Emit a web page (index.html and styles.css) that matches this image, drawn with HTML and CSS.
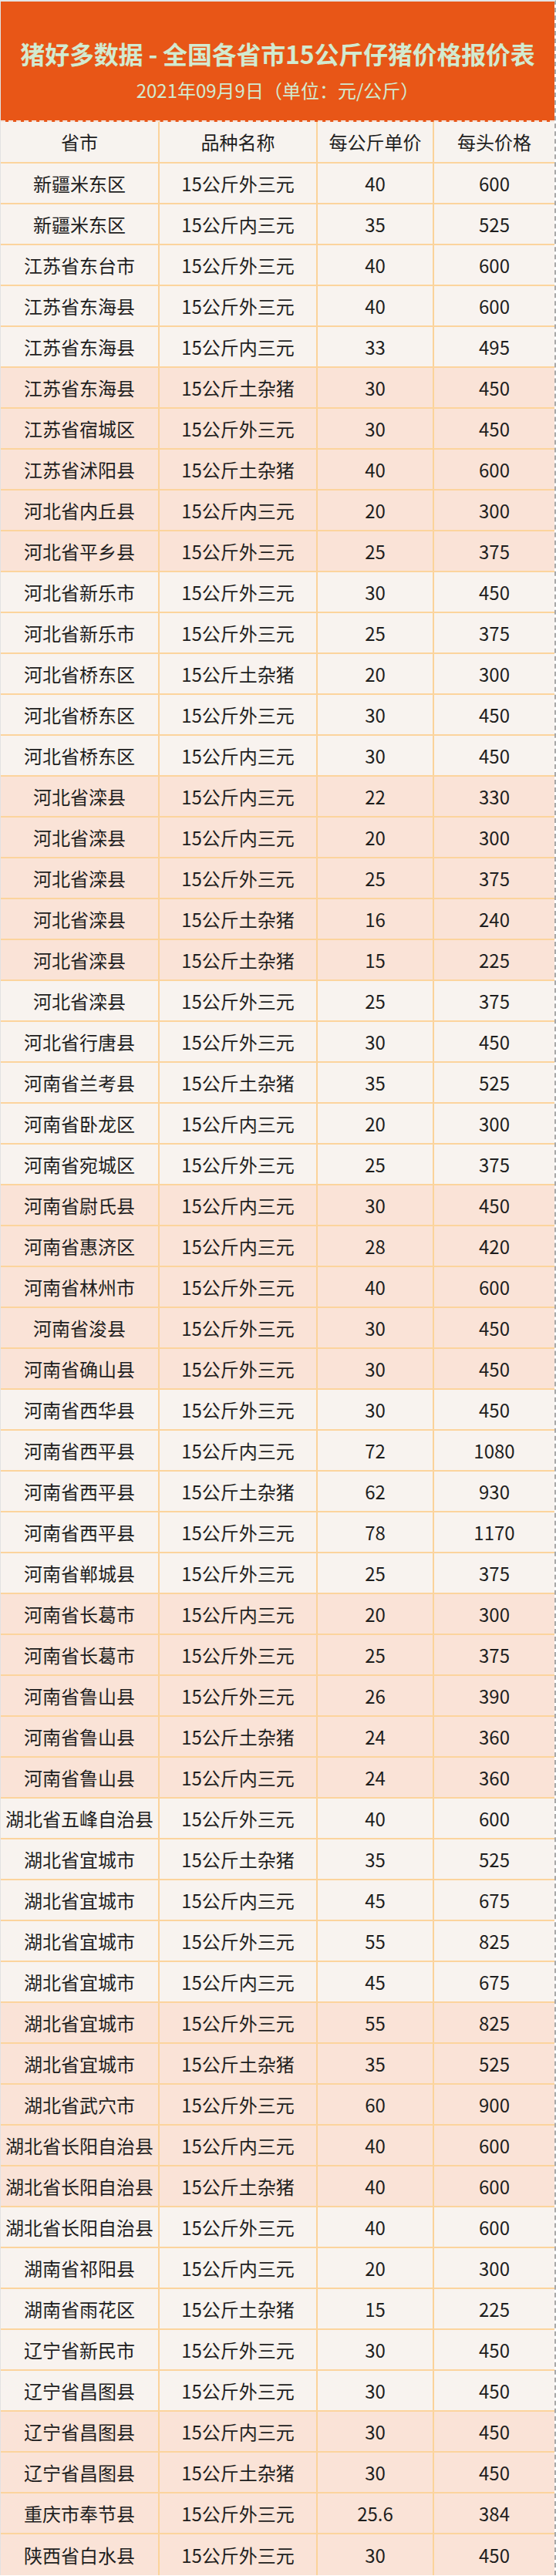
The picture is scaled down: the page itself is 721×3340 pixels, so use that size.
FILE: index.html
```html
<!DOCTYPE html>
<html lang="zh-CN">
<head>
<meta charset="utf-8">
<title>猪好多数据 - 全国各省市15公斤仔猪价格报价表</title>
<link rel="stylesheet" href="styles.css">
</head>
<body>
<div class="sheet">
  <header class="banner">
    <h1 class="title">猪好多数据 - 全国各省市15公斤仔猪价格报价表</h1>
    <p class="subtitle">2021年09月9日（单位：元/公斤）</p>
  </header>
  <div class="table">
    <div class="row head"><div class="cell">省市</div><div class="cell">品种名称</div><div class="cell">每公斤单价</div><div class="cell">每头价格</div></div>
    <div class="row"><div class="cell">新疆米东区</div><div class="cell">15公斤外三元</div><div class="cell">40</div><div class="cell">600</div></div>
    <div class="row"><div class="cell">新疆米东区</div><div class="cell">15公斤内三元</div><div class="cell">35</div><div class="cell">525</div></div>
    <div class="row"><div class="cell">江苏省东台市</div><div class="cell">15公斤外三元</div><div class="cell">40</div><div class="cell">600</div></div>
    <div class="row"><div class="cell">江苏省东海县</div><div class="cell">15公斤外三元</div><div class="cell">40</div><div class="cell">600</div></div>
    <div class="row"><div class="cell">江苏省东海县</div><div class="cell">15公斤内三元</div><div class="cell">33</div><div class="cell">495</div></div>
    <div class="row alt"><div class="cell">江苏省东海县</div><div class="cell">15公斤土杂猪</div><div class="cell">30</div><div class="cell">450</div></div>
    <div class="row alt"><div class="cell">江苏省宿城区</div><div class="cell">15公斤外三元</div><div class="cell">30</div><div class="cell">450</div></div>
    <div class="row alt"><div class="cell">江苏省沭阳县</div><div class="cell">15公斤土杂猪</div><div class="cell">40</div><div class="cell">600</div></div>
    <div class="row alt"><div class="cell">河北省内丘县</div><div class="cell">15公斤内三元</div><div class="cell">20</div><div class="cell">300</div></div>
    <div class="row alt"><div class="cell">河北省平乡县</div><div class="cell">15公斤外三元</div><div class="cell">25</div><div class="cell">375</div></div>
    <div class="row"><div class="cell">河北省新乐市</div><div class="cell">15公斤外三元</div><div class="cell">30</div><div class="cell">450</div></div>
    <div class="row"><div class="cell">河北省新乐市</div><div class="cell">15公斤外三元</div><div class="cell">25</div><div class="cell">375</div></div>
    <div class="row"><div class="cell">河北省桥东区</div><div class="cell">15公斤土杂猪</div><div class="cell">20</div><div class="cell">300</div></div>
    <div class="row"><div class="cell">河北省桥东区</div><div class="cell">15公斤外三元</div><div class="cell">30</div><div class="cell">450</div></div>
    <div class="row"><div class="cell">河北省桥东区</div><div class="cell">15公斤内三元</div><div class="cell">30</div><div class="cell">450</div></div>
    <div class="row alt"><div class="cell">河北省滦县</div><div class="cell">15公斤内三元</div><div class="cell">22</div><div class="cell">330</div></div>
    <div class="row alt"><div class="cell">河北省滦县</div><div class="cell">15公斤内三元</div><div class="cell">20</div><div class="cell">300</div></div>
    <div class="row alt"><div class="cell">河北省滦县</div><div class="cell">15公斤外三元</div><div class="cell">25</div><div class="cell">375</div></div>
    <div class="row alt"><div class="cell">河北省滦县</div><div class="cell">15公斤土杂猪</div><div class="cell">16</div><div class="cell">240</div></div>
    <div class="row alt"><div class="cell">河北省滦县</div><div class="cell">15公斤土杂猪</div><div class="cell">15</div><div class="cell">225</div></div>
    <div class="row"><div class="cell">河北省滦县</div><div class="cell">15公斤外三元</div><div class="cell">25</div><div class="cell">375</div></div>
    <div class="row"><div class="cell">河北省行唐县</div><div class="cell">15公斤外三元</div><div class="cell">30</div><div class="cell">450</div></div>
    <div class="row"><div class="cell">河南省兰考县</div><div class="cell">15公斤土杂猪</div><div class="cell">35</div><div class="cell">525</div></div>
    <div class="row"><div class="cell">河南省卧龙区</div><div class="cell">15公斤内三元</div><div class="cell">20</div><div class="cell">300</div></div>
    <div class="row"><div class="cell">河南省宛城区</div><div class="cell">15公斤外三元</div><div class="cell">25</div><div class="cell">375</div></div>
    <div class="row alt"><div class="cell">河南省尉氏县</div><div class="cell">15公斤内三元</div><div class="cell">30</div><div class="cell">450</div></div>
    <div class="row alt"><div class="cell">河南省惠济区</div><div class="cell">15公斤内三元</div><div class="cell">28</div><div class="cell">420</div></div>
    <div class="row alt"><div class="cell">河南省林州市</div><div class="cell">15公斤外三元</div><div class="cell">40</div><div class="cell">600</div></div>
    <div class="row alt"><div class="cell">河南省浚县</div><div class="cell">15公斤外三元</div><div class="cell">30</div><div class="cell">450</div></div>
    <div class="row alt"><div class="cell">河南省确山县</div><div class="cell">15公斤外三元</div><div class="cell">30</div><div class="cell">450</div></div>
    <div class="row"><div class="cell">河南省西华县</div><div class="cell">15公斤外三元</div><div class="cell">30</div><div class="cell">450</div></div>
    <div class="row"><div class="cell">河南省西平县</div><div class="cell">15公斤内三元</div><div class="cell">72</div><div class="cell">1080</div></div>
    <div class="row"><div class="cell">河南省西平县</div><div class="cell">15公斤土杂猪</div><div class="cell">62</div><div class="cell">930</div></div>
    <div class="row"><div class="cell">河南省西平县</div><div class="cell">15公斤外三元</div><div class="cell">78</div><div class="cell">1170</div></div>
    <div class="row"><div class="cell">河南省郸城县</div><div class="cell">15公斤外三元</div><div class="cell">25</div><div class="cell">375</div></div>
    <div class="row alt"><div class="cell">河南省长葛市</div><div class="cell">15公斤内三元</div><div class="cell">20</div><div class="cell">300</div></div>
    <div class="row alt"><div class="cell">河南省长葛市</div><div class="cell">15公斤外三元</div><div class="cell">25</div><div class="cell">375</div></div>
    <div class="row alt"><div class="cell">河南省鲁山县</div><div class="cell">15公斤外三元</div><div class="cell">26</div><div class="cell">390</div></div>
    <div class="row alt"><div class="cell">河南省鲁山县</div><div class="cell">15公斤土杂猪</div><div class="cell">24</div><div class="cell">360</div></div>
    <div class="row alt"><div class="cell">河南省鲁山县</div><div class="cell">15公斤内三元</div><div class="cell">24</div><div class="cell">360</div></div>
    <div class="row"><div class="cell">湖北省五峰自治县</div><div class="cell">15公斤外三元</div><div class="cell">40</div><div class="cell">600</div></div>
    <div class="row"><div class="cell">湖北省宜城市</div><div class="cell">15公斤土杂猪</div><div class="cell">35</div><div class="cell">525</div></div>
    <div class="row"><div class="cell">湖北省宜城市</div><div class="cell">15公斤内三元</div><div class="cell">45</div><div class="cell">675</div></div>
    <div class="row"><div class="cell">湖北省宜城市</div><div class="cell">15公斤外三元</div><div class="cell">55</div><div class="cell">825</div></div>
    <div class="row"><div class="cell">湖北省宜城市</div><div class="cell">15公斤内三元</div><div class="cell">45</div><div class="cell">675</div></div>
    <div class="row alt"><div class="cell">湖北省宜城市</div><div class="cell">15公斤外三元</div><div class="cell">55</div><div class="cell">825</div></div>
    <div class="row alt"><div class="cell">湖北省宜城市</div><div class="cell">15公斤土杂猪</div><div class="cell">35</div><div class="cell">525</div></div>
    <div class="row alt"><div class="cell">湖北省武穴市</div><div class="cell">15公斤外三元</div><div class="cell">60</div><div class="cell">900</div></div>
    <div class="row alt"><div class="cell">湖北省长阳自治县</div><div class="cell">15公斤内三元</div><div class="cell">40</div><div class="cell">600</div></div>
    <div class="row alt"><div class="cell">湖北省长阳自治县</div><div class="cell">15公斤土杂猪</div><div class="cell">40</div><div class="cell">600</div></div>
    <div class="row"><div class="cell">湖北省长阳自治县</div><div class="cell">15公斤外三元</div><div class="cell">40</div><div class="cell">600</div></div>
    <div class="row"><div class="cell">湖南省祁阳县</div><div class="cell">15公斤内三元</div><div class="cell">20</div><div class="cell">300</div></div>
    <div class="row"><div class="cell">湖南省雨花区</div><div class="cell">15公斤土杂猪</div><div class="cell">15</div><div class="cell">225</div></div>
    <div class="row"><div class="cell">辽宁省新民市</div><div class="cell">15公斤外三元</div><div class="cell">30</div><div class="cell">450</div></div>
    <div class="row"><div class="cell">辽宁省昌图县</div><div class="cell">15公斤外三元</div><div class="cell">30</div><div class="cell">450</div></div>
    <div class="row alt"><div class="cell">辽宁省昌图县</div><div class="cell">15公斤内三元</div><div class="cell">30</div><div class="cell">450</div></div>
    <div class="row alt"><div class="cell">辽宁省昌图县</div><div class="cell">15公斤土杂猪</div><div class="cell">30</div><div class="cell">450</div></div>
    <div class="row alt"><div class="cell">重庆市奉节县</div><div class="cell">15公斤外三元</div><div class="cell">25.6</div><div class="cell">384</div></div>
    <div class="row alt last"><div class="cell">陕西省白水县</div><div class="cell">15公斤外三元</div><div class="cell">30</div><div class="cell">450</div></div>
  </div>
</div>
</body>
</html>
```

FILE: styles.css
```css
* { box-sizing: border-box; }

html, body {
  margin: 0;
  padding: 0;
  background: #ffffff;
}

body {
  font-family: "Noto Sans CJK SC", "Noto Sans", sans-serif;
  color: #222222;
}

.sheet {
  width: 721px;
  border-top: 2px solid #e4e4e4;
  border-left: 1px solid #e2e2e2;
  border-right: 2px dashed #a8a8a8;
}

.banner {
  height: 156px;
  background: #e85617;
  border-bottom: 2px dashed #f3e3da;
  display: flex;
  flex-direction: column;
  align-items: center;
  padding-top: 43px;
}

.title {
  margin: 0;
  font-size: 32px;
  line-height: 48px;
  font-weight: 700;
  color: #d2ead0;
  letter-spacing: -0.2px;
  white-space: nowrap;
}

.subtitle {
  margin: 7px 0 0;
  font-size: 24px;
  line-height: 34px;
  font-weight: 400;
  color: #d2ead0;
  white-space: nowrap;
}

.table {
  display: flex;
  flex-direction: column;
}

.row {
  display: grid;
  grid-template-columns: 204px 205px 151px 158px;
  height: 53px;
  background: #f8f3ef;
  border-bottom: 2px solid #fcd49d;
}

.row.head {
  height: 54px;
  background: #f7f3ef;
}

.row.alt {
  background: #fae3d7;
}

.row.last {
  border-bottom: none;
}

.cell {
  display: flex;
  align-items: center;
  justify-content: center;
  font-size: 24px;
  line-height: 1;
  white-space: nowrap;
  color: #1e1e1e;
}

.cell + .cell {
  border-left: 2px solid #fbd39a;
}
```
